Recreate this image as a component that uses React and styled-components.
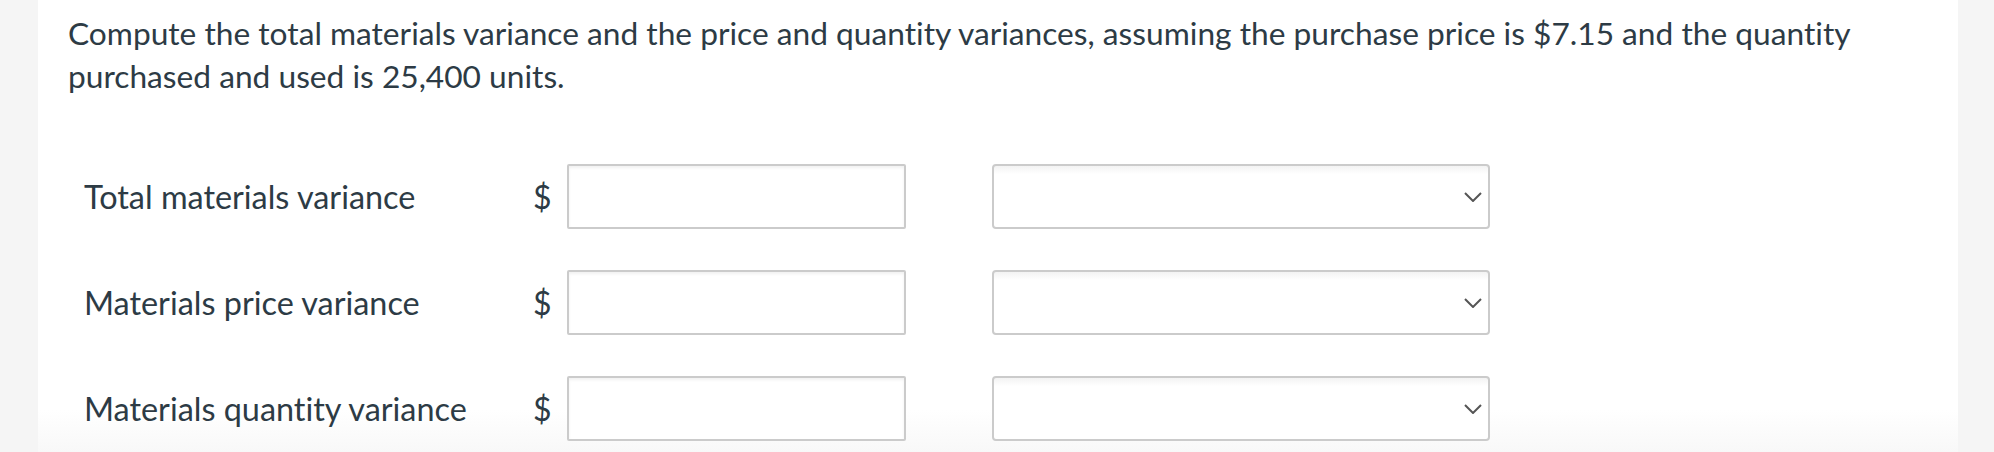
import React from 'react'
import styled, { createGlobalStyle } from 'styled-components'

const GlobalStyle = createGlobalStyle`
  html, body {
    margin: 0;
    padding: 0;
    background: #f5f5f5;
  }
  body {
    font-family: Lato, "Open Sans", sans-serif;
    color: #2d3b45;
  }
`

const Page = styled.div`
  display: grid;
  grid-template-columns: 38px 1920px 1fr;
  min-height: 452px;
`

const Gutter = styled.div`
  background: #f5f5f5;
`

const Panel = styled.main`
  background: linear-gradient(to bottom, #ffffff 0, #ffffff 410px, #f8f8f8 452px);
  padding: 12px 30px 0;
`

const Question = styled.p`
  margin: 0;
  font-size: 31.7px;
  line-height: 43px;
  max-width: 1820px;
  font-variant-ligatures: none;
`

const Table = styled.div`
  display: grid;
  grid-template-columns: 449px 34px 339px 86px 498px;
  grid-auto-rows: 65px;
  row-gap: 41px;
  align-items: center;
  margin-top: 66px;
  padding-left: 16px;
`

const Label = styled.div`
  font-size: 32.4px;
  font-variant-ligatures: none;
`

const Currency = styled.div`
  font-size: 32px;
`

const AmountInput = styled.input`
  box-sizing: border-box;
  width: 100%;
  height: 65px;
  border: 2px solid #cbcbcb;
  border-radius: 2px;
  box-shadow: inset 0 2px 3px rgba(0, 0, 0, 0.06);
  background: #fff;
  font: inherit;
  font-size: 26px;
  padding: 0 12px;
  outline: none;
`

const SelectBox = styled.div`
  grid-column: 5;
  box-sizing: border-box;
  height: 65px;
  border: 2px solid #cbcbcb;
  border-radius: 4px;
  background: linear-gradient(to bottom, #f3f3f3 0, #ffffff 8px, #ffffff 100%);
  display: flex;
  align-items: center;
  justify-content: flex-end;
  padding-right: 6px;
`

const Chevron = () => (
  <svg width="18" height="10" viewBox="0 0 18 10">
    <path d="M1 1 L9 9 L17 1" fill="none" stroke="#555" strokeWidth="2" />
  </svg>
)

const rows = [
  'Total materials variance',
  'Materials price variance',
  'Materials quantity variance'
]

const App = () => {
  return (
    <>
      <GlobalStyle />
      <Page>
        <Gutter />
        <Panel>
          <Question>
            Compute the total materials variance and the price and quantity variances, assuming the purchase price is $7.15 and the quantity purchased and used is 25,400 units.
          </Question>
          <Table>
            {rows.map(label => (
              <React.Fragment key={label}>
                <Label>{label}</Label>
                <Currency>$</Currency>
                <AmountInput type="text" />
                <SelectBox>
                  <Chevron />
                </SelectBox>
              </React.Fragment>
            ))}
          </Table>
        </Panel>
        <Gutter />
      </Page>
    </>
  )
}

export default App
